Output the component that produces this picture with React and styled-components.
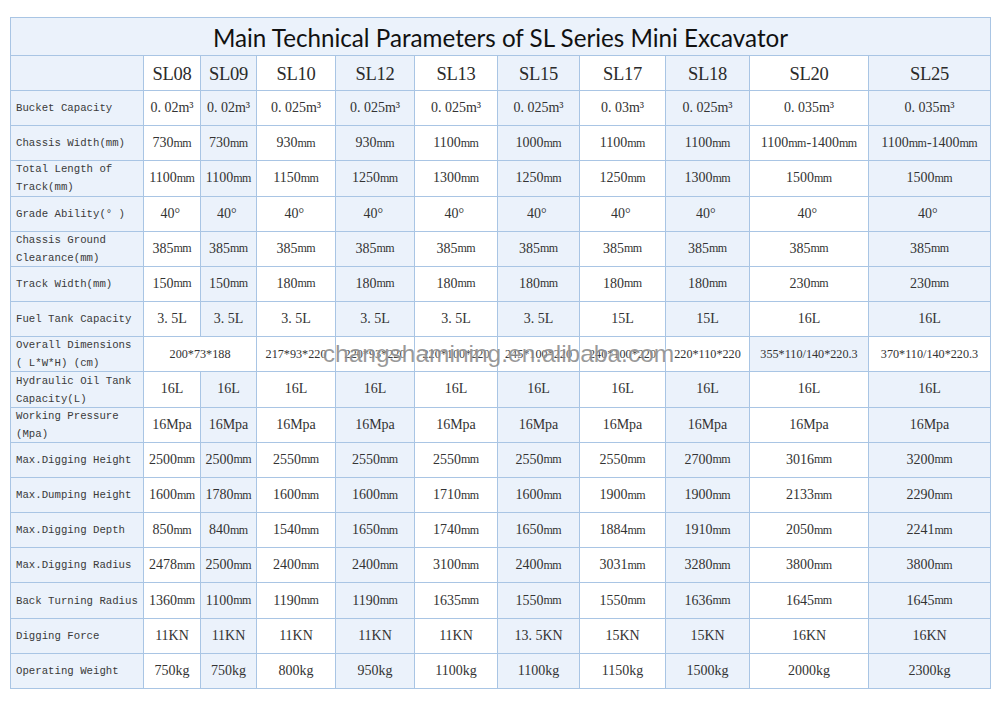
import styled, { createGlobalStyle } from "styled-components";

const GlobalStyle = createGlobalStyle`
    body {
        margin: 0;
        background: #fff;
    }
`

const LINE = '#a9c5e4'
const LIGHT = '#ebf2fb'

const models = ['SL08', 'SL09', 'SL10', 'SL12', 'SL13', 'SL15', 'SL17', 'SL18', 'SL20', 'SL25']

const rows = [
    ['Bucket Capacity', ['0. 02m³', '0. 02m³', '0. 025m³', '0. 025m³', '0. 025m³', '0. 025m³', '0. 03m³', '0. 025m³', '0. 035m³', '0. 035m³']],
    ['Chassis Width(mm)', ['730mm', '730mm', '930mm', '930mm', '1100mm', '1000mm', '1100mm', '1100mm', '1100mm-1400mm', '1100mm-1400mm']],
    ['Total Length of\nTrack(mm)', ['1100mm', '1100mm', '1150mm', '1250mm', '1300mm', '1250mm', '1250mm', '1300mm', '1500mm', '1500mm']],
    ['Grade Ability(° )', Array(10).fill('40° ')],
    ['Chassis Ground\nClearance(mm)', Array(10).fill('385mm')],
    ['Track Width(mm)', ['150mm', '150mm', '180mm', '180mm', '180mm', '180mm', '180mm', '180mm', '230mm', '230mm']],
    ['Fuel Tank Capacity', ['3. 5L', '3. 5L', '3. 5L', '3. 5L', '3. 5L', '3. 5L', '15L', '15L', '16L', '16L']],
    'dims',
    ['Hydraulic Oil Tank\nCapacity(L)', Array(10).fill('16L')],
    ['Working Pressure\n(Mpa)', Array(10).fill('16Mpa')],
    ['Max.Digging Height', ['2500mm', '2500mm', '2550mm', '2550mm', '2550mm', '2550mm', '2550mm', '2700mm', '3016mm', '3200mm']],
    ['Max.Dumping Height', ['1600mm', '1780mm', '1600mm', '1600mm', '1710mm', '1600mm', '1900mm', '1900mm', '2133mm', '2290mm']],
    ['Max.Digging Depth', ['850mm', '840mm', '1540mm', '1650mm', '1740mm', '1650mm', '1884mm', '1910mm', '2050mm', '2241mm']],
    ['Max.Digging Radius', ['2478mm', '2500mm', '2400mm', '2400mm', '3100mm', '2400mm', '3031mm', '3280mm', '3800mm', '3800mm']],
    ['Back Turning Radius', ['1360mm', '1100mm', '1190mm', '1190mm', '1635mm', '1550mm', '1550mm', '1636mm', '1645mm', '1645mm']],
    ['Digging Force', ['11KN', '11KN', '11KN', '11KN', '11KN', '13. 5KN', '15KN', '15KN', '16KN', '16KN']],
    ['Operating Weight', ['750kg', '750kg', '800kg', '950kg', '1100kg', '1100kg', '1150kg', '1500kg', '2000kg', '2300kg']],
]

const dims = [
    { v: '200*73*188', span: 2, light: false },
    { v: '217*93*220', light: false },
    { v: '220*93*220', light: false },
    { v: '220*100*220', light: false },
    { v: '245*100*220', light: false },
    { v: '240*100*220', light: false },
    { v: '220*110*220', light: false },
    { v: '355*110/140*220.3', light: true },
    { v: '370*110/140*220.3', light: false },
]

const Page = styled.div`
    padding: 17px 10px 22px;
`

const Sheet = styled.div`
    position: relative;
    box-sizing: border-box;
    width: 981px;
    height: 672px;
    padding: 1px;
    gap: 1px;
    background: ${LINE};
    display: grid;
    grid-template-columns: 132px 56px 55px 78px 78px 82px 81px 85px 83px 118px 121px;
    grid-template-rows: 37px 34px repeat(17, 1fr);
`

const Title = styled.div`
    grid-column: 1 / -1;
    background: ${LIGHT};
    display: flex;
    align-items: center;
    justify-content: center;
    font-family: Lato, "Open Sans", sans-serif;
    font-size: 24.2px;
    color: #111;
    padding-top: 1px;
`

const Cell = styled.div`
    grid-column: span ${({ span }) => span || 1};
    background: ${({ light }) => (light ? LIGHT : '#fff')};
    display: flex;
    align-items: center;
    justify-content: center;
    font-family: "Liberation Serif", serif;
    font-size: ${({ fs }) => fs || '14px'};
    color: #333;
    white-space: pre;
    overflow: hidden;
`

const HeadCell = styled(Cell)`
    font-size: 18.5px;
    color: #2a2a2a;
    letter-spacing: -0.3px;
    padding-top: 2px;
`

const Label = styled.div`
    background: ${LIGHT};
    display: flex;
    align-items: center;
    padding: 0 2px 0 5px;
    font-family: "Liberation Mono", monospace;
    font-size: 10.7px;
    line-height: 18px;
    color: #3a3a3a;
    white-space: pre-line;
    overflow: hidden;
`

const Unit = styled.span`
    font-size: 12px;
    letter-spacing: -0.6px;
    margin-right: 0.6px;
`

const Watermark = styled.div`
    position: absolute;
    left: 0;
    right: 4px;
    top: 320px;
    height: 34px;
    line-height: 34px;
    text-align: center;
    font-family: "Liberation Sans", Arial, sans-serif;
    font-size: 24.5px;
    color: rgba(120, 120, 120, 0.75);
    pointer-events: none;
    text-shadow: 0 0 2px rgba(255, 255, 255, 0.8);
`

const withUnits = (text) =>
    text.split(/(mm)/).map((part, i) => (part === 'mm' ? <Unit key={i}>mm</Unit> : part))

const App = () => {

    return (
        <Page>
            <GlobalStyle />
            <Sheet>
                <Title>Main Technical Parameters of SL Series Mini Excavator</Title>
                <Label />
                {models.map((m, i) => (
                    <HeadCell key={m} light={(i + 1) % 2 === 0}>{m}</HeadCell>
                ))}
                {rows.map((row, r) => {
                    if (row === 'dims') {
                        return [
                            <Label key="dl">{'Overall Dimensions\n( L*W*H) (cm)'}</Label>,
                            ...dims.map((d, i) => (
                                <Cell key={'d' + i} span={d.span} light={d.light} fs="12.2px">{d.v}</Cell>
                            )),
                        ]
                    }
                    const [label, values] = row
                    return [
                        <Label key={'l' + r}>{label}</Label>,
                        ...values.map((v, i) => (
                            <Cell key={r + '-' + i} light={(i + 1) % 2 === 0}>{withUnits(v)}</Cell>
                        )),
                    ]
                })}
                <Watermark>changshamining.en.alibaba.com</Watermark>
            </Sheet>
        </Page>
    )

}

export default App;
